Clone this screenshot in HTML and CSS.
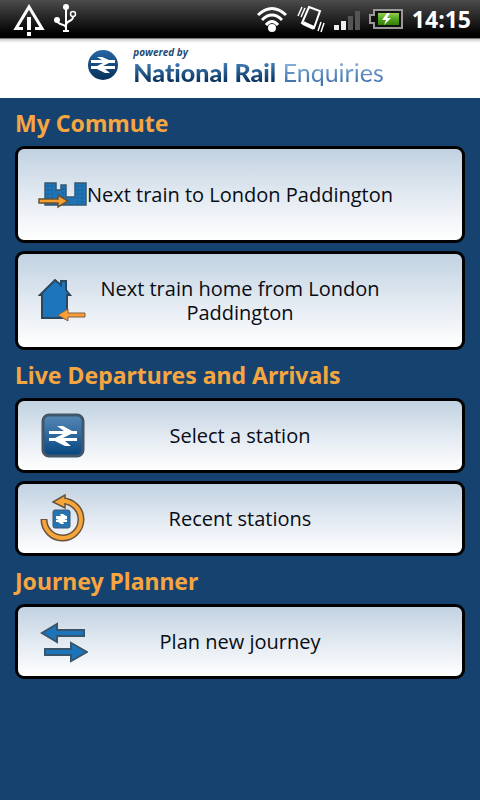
FILE: index.html
```html
<!DOCTYPE html>
<html lang="en">
<head>
<meta charset="utf-8">
<meta name="viewport" content="width=device-width, initial-scale=1">
<title>National Rail Enquiries</title>
<link rel="stylesheet" href="styles.css">
</head>
<body>
<div class="status">
  <div class="status-group notices">
    <svg width="32" height="36" viewBox="0 0 32 36" aria-hidden="true"><path d="M10 27.500H3L16 6l13 21.500h-7" fill="none" stroke="#fff" stroke-width="3"/><path d="M14 16h4v13h-4zM14 31h4v4h-4z" fill="#fff"/></svg>
    <svg width="24" height="32" viewBox="0 0 24 32" aria-hidden="true"><circle cx="13" cy="4" r="3" fill="#fff"/><circle cx="4" cy="17" r="3" fill="#fff"/><circle cx="20" cy="11" r="2.500" fill="none" stroke="#fff" stroke-width="1.500"/><path d="M13 4v24M10 28h6M4 17c0 6 9 3 9 8M20 14c0 5-7 3-7 8" fill="none" stroke="#fff" stroke-width="2"/></svg>
  </div>
  <div class="status-group system">
    <svg width="32" height="28" viewBox="0 0 32 28" aria-hidden="true"><g fill="none" stroke="#fff" stroke-width="3"><path d="M2 10Q16-3 30 10M6 15Q16 5 26 15M10 20Q16 13 22 20"/></g><circle cx="16" cy="23" r="4" fill="#fff"/></svg>
    <svg width="28" height="28" viewBox="0 0 28 28" aria-hidden="true"><g fill="none" stroke="#fff"><path d="M12 2l11 4-6 17-12-5z" stroke-width="2"/><path d="M6 18l11 5" stroke-width="4"/><path d="M5 2L1 11M8 3L4 12M24 17l-3 9M27 18l-3 9" stroke-width="1.500"/></g></svg>
    <svg width="26" height="24" viewBox="0 0 26 24" aria-hidden="true"><path d="M0 18h5v5H0zM7 14h5v9H7z" fill="#eee"/><path d="M14 9h5v14h-5zM21 4h5v19h-5z" fill="#555"/></svg>
    <svg width="34" height="20" viewBox="0 0 34 20" aria-hidden="true"><defs><linearGradient id="cell" x2="0" y2="1"><stop stop-color="#93cf4c"/><stop offset=".5" stop-color="#51a51d"/><stop offset="1" stop-color="#327f08"/></linearGradient></defs><path d="M5 1h28v18H5v-5H1V6h4z" fill="#111" stroke="#999" stroke-width="2"/><path d="M9 4h21v12H9z" fill="url(#cell)"/><path d="M18 4l-5 7h4l-2 5 7-7h-4l3-5z" fill="#fff"/></svg>
    <time class="clock" datetime="14:15">14:15</time>
  </div>
</div>
<header class="brand">
  <svg class="brand-mark" width="30" height="30" viewBox="0 0 30 30" aria-hidden="true"><defs><linearGradient id="disc" x2="0" y2="1"><stop stop-color="#2766a3"/><stop offset="1" stop-color="#07305a"/></linearGradient></defs><circle cx="15" cy="15" r="15" fill="url(#disc)"/><path d="M3 10h11L9 7h5l7 3h6v3h-6l-6 3h12v3H17l5 4h-5l-8-4H3v-3h6l6-3H3z" fill="#fff"/></svg>
  <div class="brand-text">
    <span class="powered">powered by</span>
    <h1 class="name"><span class="name-rail">National Rail</span> <span class="name-enq">Enquiries</span></h1>
  </div>
</header>
<main class="content">
  <section>
    <h2>My Commute</h2>
    <div class="list">
      <button class="action first" type="button">
        <svg width="50" height="50" viewBox="0 0 50 50" aria-hidden="true"><path d="M7 13h11v7h5v-5h5v12h9V13h11v22H7z" fill="#1f72b4" stroke="#365873" stroke-width="1.500"/><path d="M10 15v20M14 15v20M40 15v20M44 15v20M25 18v11" stroke="#1b5788" stroke-dasharray="2 2"/><path d="M1 29h19v-4l10 6-10 6v-4H1z" fill="#fa9e2c" stroke="#63513b" stroke-width="1.500"/></svg>
        <span>Next train to London Paddington</span>
      </button>
      <button class="action second" type="button">
        <svg width="50" height="50" viewBox="0 0 50 50" aria-hidden="true"><path d="M4 42V19H2L17 4l6 5V5h5v9l4 5h-3v23z" fill="#1d75bc" stroke="#2c475c" stroke-width="2"/><path d="M47 37v4H30v4l-10-6 10-6v4z" fill="#fa9e36" stroke="#806044"/></svg>
        <span>Next train home from London Paddington</span>
      </button>
    </div>
  </section>
  <section>
    <h2>Live Departures and Arrivals</h2>
    <div class="list">
      <button class="action" type="button">
        <svg width="50" height="50" viewBox="0 0 50 50" aria-hidden="true"><defs><linearGradient id="tile" x2="0" y2="1"><stop stop-color="#5589b5"/><stop offset="1" stop-color="#064580"/></linearGradient></defs><rect x="5" y="4" width="40" height="41" rx="6" fill="url(#tile)" stroke="#41566b" stroke-width="3"/><path d="M11 20h15l-7-5h6l9 5h5v3h-6l-8 4h14v3H27l6 5h-6l-10-5h-6v-3h6l8-4H11z" fill="#fff"/></svg>
        <span>Select a station</span>
      </button>
      <button class="action" type="button">
        <svg width="50" height="50" viewBox="0 0 50 50" aria-hidden="true"><path d="M6 25A18.500 18.500 0 1 0 25 7" fill="none" stroke="#69533a" stroke-width="7"/><path d="M6 26A18.500 18.500 0 1 0 25 7" fill="none" stroke="#f6a53b" stroke-width="4"/><path d="M27 1v13l-12-6z" fill="#f6a53b" stroke="#69533a" stroke-width="1.500"/><path d="M24 7h5" stroke="#f6a53b" stroke-width="4"/><rect x="15" y="16" width="17" height="18" rx="2" fill="#2675b0" stroke="#3c5971"/><path d="M18 22h5l-1-2h3l3 2h1v3l-3 1h3v2h-4l1 2h-3l-3-2h-2v-2l3-1h-3z" fill="#fff"/></svg>
        <span>Recent stations</span>
      </button>
    </div>
  </section>
  <section>
    <h2>Journey Planner</h2>
    <div class="list">
      <button class="action" type="button">
        <svg width="50" height="50" viewBox="0 0 50 50" aria-hidden="true"><g fill="#1c75bb" stroke="#38556b" stroke-width="2"><path d="M46 13v6H19v6L4 16l15-9v6zM7 32h26v-6l16 9-16 9v-6H7z"/></g></svg>
        <span>Plan new journey</span>
      </button>
    </div>
  </section>
</main>
</body>
</html>
```
FILE: styles.css
```css
* {
  box-sizing: border-box;
}

body {
  margin: 0;
  min-height: 100vh;
  background: #16426f;
  font-family: "Open Sans", "Noto Sans", sans-serif;
}

.status {
  display: flex;
  justify-content: space-between;
  height: 38px;
  padding: 0 9px 0 13px;
  background: linear-gradient(#4c4c4c, #222 50%, #000 90%);
  color: #fff;
}

.status-group {
  display: flex;
  align-items: center;
}

.notices {
  gap: 8px;
}

.system {
  gap: 9px;
}

.clock {
  font-size: 23px;
  font-weight: 700;
  line-height: 38px;
}

.brand {
  display: flex;
  justify-content: center;
  gap: 15px;
  height: 60px;
  padding: 6px 8px 0 0;
  border-top: 1px solid #777;
  background: linear-gradient(#ccc, #fff 4px);
}

.brand-mark {
  margin-top: 5px;
}

.brand-text {
  display: flex;
  flex-direction: column;
}

.powered {
  color: #234b73;
  font-size: 10px;
  font-style: italic;
  font-weight: 700;
  line-height: 14px;
}

.name {
  margin: 0;
  font-family: Lato, "Noto Sans", sans-serif;
  font-size: 25px;
  font-variant-ligatures: none;
  font-weight: 400;
  line-height: 26px;
  white-space: nowrap;
}

.name-rail,
.name-enq {
  background: linear-gradient(#3f7db5 20%, #0b3561 80%);
  background-clip: text;
  color: transparent;
}

.name-rail {
  font-weight: 900;
}

.name-enq {
  background-image: linear-gradient(#86b3de 20%, #4474ac 80%);
}

.content {
  padding: 0 15px 16px;
}

h2 {
  margin: 0;
  padding-top: 2px;
  color: #f6a640;
  font-family: "Noto Sans", sans-serif;
  font-size: 23px;
  font-weight: 700;
  line-height: 46px;
}

.list {
  display: grid;
  gap: 8px;
}

.action {
  display: grid;
  grid-template-columns: 44px 1fr 44px;
  align-items: center;
  width: 100%;
  min-height: 75px;
  padding: 0 20px;
  border: 3px solid #000;
  border-radius: 9px;
  background: linear-gradient(#c1d2e1, #e2e9f1 50%, #fff);
  color: #080c14;
  font-family: inherit;
  font-size: 20px;
  line-height: 24px;
  text-align: center;
}

.first {
  min-height: 97px;
}

.second {
  min-height: 99px;
}
```
